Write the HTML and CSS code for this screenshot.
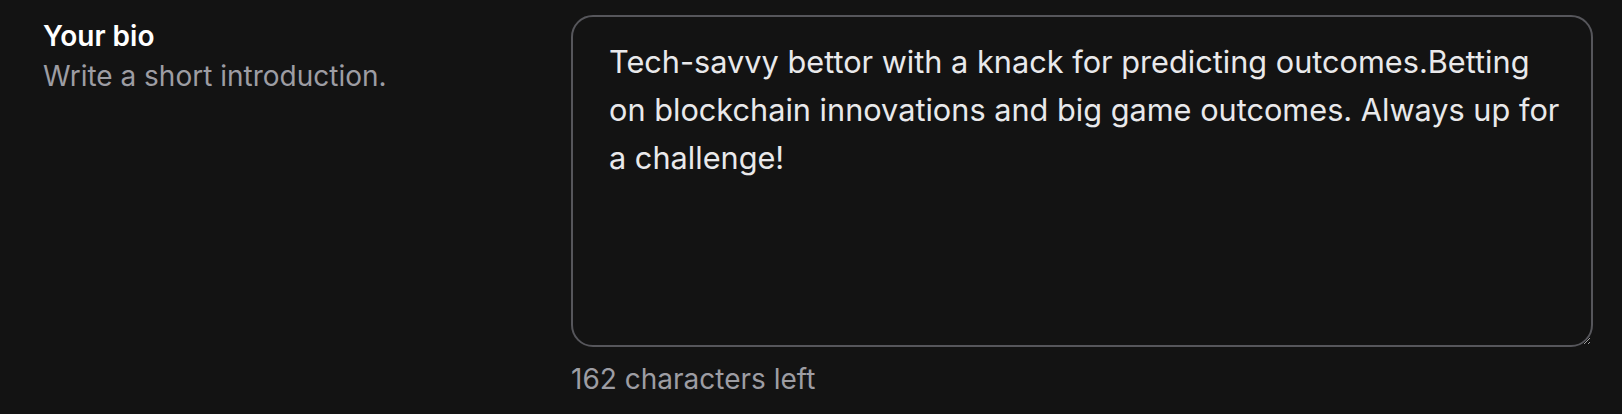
FILE: index.html
```html
<!DOCTYPE html>
<html lang="en">
<head>
<meta charset="utf-8">
<title>Your bio</title>
<link rel="stylesheet" href="styles.css">
</head>
<body>
<div class="field">
  <div class="field-info">
    <div class="field-title">Your bio</div>
    <div class="field-desc">Write a short introduction.</div>
  </div>
  <div class="field-control">
    <textarea class="bio-input">Tech-savvy bettor with a knack for predicting outcomes.Betting on blockchain innovations and big game outcomes. Always up for a challenge!</textarea>
    <div class="char-count">162 characters left</div>
  </div>
</div>
</body>
</html>
```

FILE: styles.css
```css
html, body {
  margin: 0;
  padding: 0;
  background: #131313;
}
body {
  font-family: Inter, "Noto Sans", sans-serif;
  color: #f4f4f5;
  width: 1622px;
  height: 414px;
  overflow: hidden;
}
.field {
  display: grid;
  grid-template-columns: 528px 1fr;
  padding: 15px 29px 0 43px;
}
.field-info {
  padding-top: 1px;
}
.field-title {
  font-size: 28px;
  font-weight: 600;
  line-height: 40px;
  color: #ffffff;
}
.field-desc {
  font-size: 28px;
  line-height: 40px;
  color: #9d9da3;
}
.field-control {
  display: flex;
  flex-direction: column;
}
.bio-input {
  box-sizing: border-box;
  width: 100%;
  height: 332px;
  margin: 0;
  padding: 21px 28px 18px 36px;
  background: #131313;
  border: 2px solid #56565b;
  border-radius: 22px;
  color: #e9e9eb;
  font-family: Inter, "Noto Sans", sans-serif;
  font-size: 30.7px;
  line-height: 48px;
  outline: none;
  resize: vertical;
}
.char-count {
  margin-top: 12px;
  font-size: 28px;
  line-height: 40px;
  color: #9d9da3;
}
```
